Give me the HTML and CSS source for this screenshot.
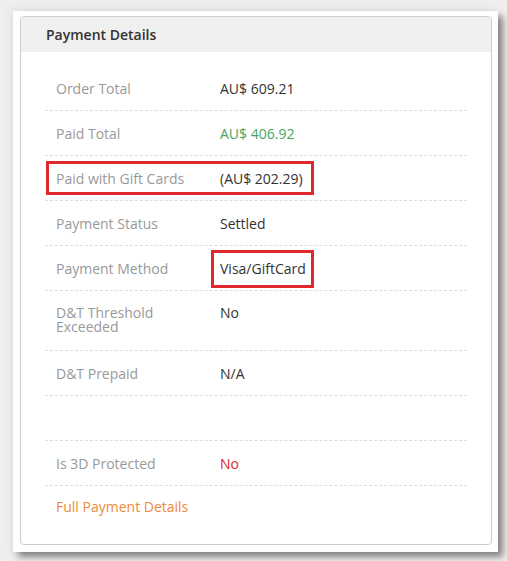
FILE: index.html
```html
<!DOCTYPE html>
<html>
<head>
<meta charset="utf-8">
<link rel="stylesheet" href="styles.css">
</head>
<body>
<div class="card">
  <div class="panel">
    <div class="panel-heading">Payment Details</div>
    <div class="panel-body">
      <div class="row"><div class="label">Order Total</div><div class="value">AU$ 609.21</div></div>
      <div class="row"><div class="label">Paid Total</div><div class="value green">AU$ 406.92</div></div>
      <div class="row"><div class="label">Paid with Gift Cards</div><div class="value">(AU$ 202.29)</div><span class="mark mark-gift"></span></div>
      <div class="row"><div class="label">Payment Status</div><div class="value">Settled</div></div>
      <div class="row"><div class="label">Payment Method</div><div class="value">Visa/GiftCard</div><span class="mark mark-method"></span></div>
      <div class="row row-tall"><div class="label">D&amp;T Threshold Exceeded</div><div class="value">No</div></div>
      <div class="row"><div class="label">D&amp;T Prepaid</div><div class="value">N/A</div></div>
      <div class="row row-empty"></div>
      <div class="row"><div class="label">Is 3D Protected</div><div class="value red">No</div></div>
      <div class="link-row"><a class="link" href="#">Full Payment Details</a></div>
    </div>
  </div>
</div>
</body>
</html>
```
FILE: styles.css
```css
html, body {
  margin: 0;
  padding: 0;
}
body {
  background: #efefef;
  font-family: "Open Sans", "Noto Sans", sans-serif;
  font-size: 14px;
  padding: 11px 9px 9px 13px;
  width: 485px;
  height: 541px;
}
.card {
  width: 485px;
  height: 541px;
  box-sizing: border-box;
  background: #ffffff;
  padding: 5px 6px 0 7px;
  box-shadow: 5px 5px 7px rgba(0, 0, 0, 0.45), -2px -2px 10px rgba(0, 0, 0, 0.06);
}
.panel {
  width: 472px;
  height: 529px;
  box-sizing: border-box;
  border: 1px solid #cccccc;
  border-radius: 4px;
  overflow: hidden;
}
.panel-heading {
  height: 35px;
  box-sizing: border-box;
  background: #f0f0f0;
  color: #333333;
  font-weight: 600;
  line-height: 36px;
  padding-left: 25px;
}
.panel-body {
  padding: 14px 24px 0 24px;
}
.row {
  position: relative;
  display: flex;
  height: 45px;
  box-sizing: border-box;
  padding: 13px 0 0 11px;
  line-height: 20px;
  border-bottom: 1px dashed #dddddd;
}
.row-tall {
  height: 60px;
  padding-top: 15px;
  line-height: 14px;
}
.label {
  width: 164px;
  flex: none;
  color: #999999;
  padding-right: 20px;
  box-sizing: border-box;
}
.value {
  color: #333333;
}
.green {
  color: #47a463;
}
.red {
  color: #d9282c;
}
.link-row {
  padding: 11px 0 0 11px;
  line-height: 20px;
}
.link {
  color: #ef8a3c;
  text-decoration: none;
}
.mark {
  position: absolute;
  border: 3px solid #e0282c;
  box-sizing: border-box;
}
.mark-gift {
  left: 1px;
  top: 5px;
  width: 268px;
  height: 34px;
}
.mark-method {
  left: 166px;
  top: 4px;
  width: 103px;
  height: 38px;
}
```
